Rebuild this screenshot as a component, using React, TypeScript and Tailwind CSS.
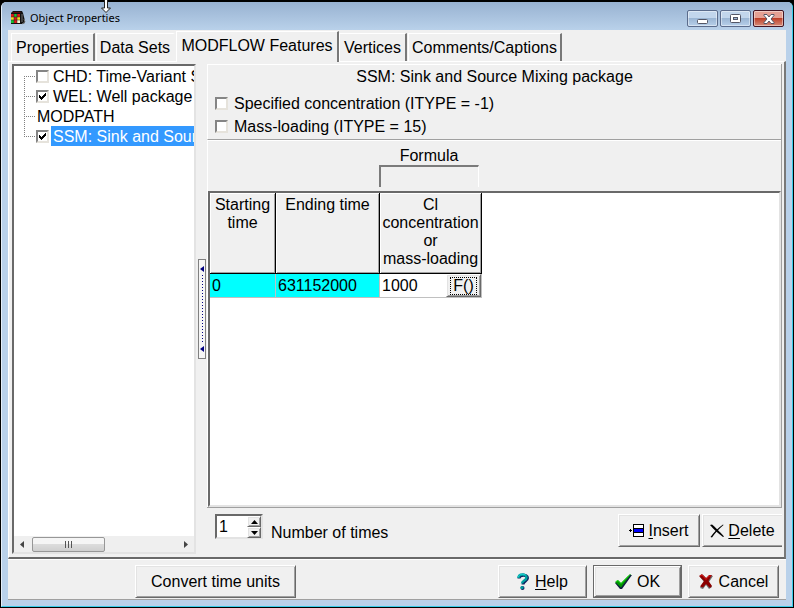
import { useState } from "react";
import type { ReactNode } from "react";

const raised =
  "border border-t-white border-l-white border-r-[#696969] border-b-[#696969] shadow-[inset_1px_1px_0_#e3e3e3,inset_-1px_-1px_0_#a0a0a0]";
const sunken =
  "border-2 border-t-[#696969] border-l-[#696969] border-r-[#e3e3e3] border-b-[#e3e3e3]";

function Check({ id, checked }: { id: string; checked?: boolean }) {
  return (
    <span className="relative block size-[13px] shrink-0">
      <input
        id={id}
        type="checkbox"
        defaultChecked={checked}
        className="peer block size-[13px] appearance-none border-2 border-t-[#858585] border-l-[#858585] border-r-[#e6e3dc] border-b-[#e6e3dc] bg-white"
      />
      <svg
        viewBox="0 0 13 13"
        className="pointer-events-none absolute inset-0 hidden size-[13px] peer-checked:block"
        shapeRendering="crispEdges"
      >
        <path
          d="M3 5h1v3h-1zM4 6h1v3h-1zM5 7h1v3h-1zM6 6h1v3h-1zM7 5h1v3h-1zM8 4h1v3h-1zM9 3h1v3h-1z"
          fill="#000"
        />
      </svg>
    </span>
  );
}

function CubeIcon() {
  return (
    <svg viewBox="0 0 16 16" className="size-4">
      <path d="M1 3l2-2h9l1 2 2 8v2l-3 1H1z" fill="#111" />
      <path d="M3 2h8l-1 1H2z" fill="#5a1010" />
      <path d="M12 4v8M14 9l1 3-3 2" stroke="#777" fill="none" />
      <path d="M1 4h3v3H1zM4 10h3v3H4zM7 4h3v3H7zM4 7h3v3H4z" fill="#e01818" />
      <path d="M4 4h3v3H4zM1 10h3v3H1z" fill="#18c030" />
      <path d="M7 7h3v3H7zM1 7h3v3H1z" fill="#f4e420" />
      <path d="M7 10h3v3H7z" fill="#f8f8d0" />
      <path d="M4 4v9M7 4v9M1 7h9M1 10h9" stroke="#222" strokeWidth="0.500" />
    </svg>
  );
}

function CaptionButton({ label, close, children }: { label: string; close?: boolean; children: ReactNode }) {
  return (
    <button
      aria-label={label}
      className={
        "flex h-[17px] w-[31px] items-center justify-center rounded-[2px] border shadow-[inset_0_0_0_1px_#ffffff70] " +
        (close
          ? "border-[#431422] bg-linear-to-b from-[#e5a093] from-45% via-[#bd3f28] via-50% to-[#d58a78]"
          : "border-[#5b6c8c] bg-linear-to-b from-[#c2d6ec] from-45% via-[#9bb6d4] via-50% to-[#b7d0ea]")
      }
    >
      {children}
    </button>
  );
}

function TitleBar() {
  return (
    <header className="flex h-[28px] shrink-0 items-start justify-between bg-linear-to-b from-[#98b2d1] to-[#b9d1ea] px-[8px]">
      <h1 className="mt-[8px] flex items-center gap-1 font-['Noto_Sans','Open_Sans',sans-serif] text-[11px] leading-4 text-black">
        <CubeIcon />
        Object Properties
      </h1>
      <div className="mt-[8px] flex gap-[2px]">
        <CaptionButton label="Minimize">
          <svg viewBox="0 0 11 10" className="h-[10px] w-[11px]">
            <rect x="0.5" y="5.5" width="10" height="4" rx="1" fill="#fff" stroke="#535666" />
          </svg>
        </CaptionButton>
        <CaptionButton label="Maximize">
          <svg viewBox="0 0 11 9" className="h-[9px] w-[11px]">
            <rect x="0.5" y="0.5" width="10" height="8" rx="1" fill="#fff" stroke="#535666" />
            <rect x="3.5" y="3.5" width="4" height="2" fill="#9bb6d4" stroke="#535666" />
          </svg>
        </CaptionButton>
        <CaptionButton label="Close" close>
          <svg viewBox="0 0 12 10" className="h-[10px] w-3">
            <path
              d="M1 .5h3L6 3l2-2.500h3v1L8 5l3 3.500v1H8L6 7 4 9.500H1v-1L4 5 1 1.500z"
              fill="#fff"
              stroke="#535666"
            />
          </svg>
        </CaptionButton>
      </div>
    </header>
  );
}

const tabs = [
  { label: "Properties", width: "w-[84px]" },
  { label: "Data Sets", width: "w-[79px]" },
  { label: "MODFLOW Features", width: "w-[163px]" },
  { label: "Vertices", width: "w-[68px]" },
  { label: "Comments/Captions", width: "w-[154px]" },
];

function Tabs() {
  return (
    <div role="tablist" className="flex h-[31px] shrink-0 items-end pl-[3px]">
      {tabs.map((t) => {
        const active = t.label === "MODFLOW Features";
        return (
          <button
            key={t.label}
            role="tab"
            aria-selected={active}
            className={
              "flex items-start justify-center border-t border-l border-t-white border-l-white bg-[#f0f0f0] leading-[18px] whitespace-nowrap " +
              t.width +
              (active
                ? " relative -mb-px h-[31px] border-r-2 border-r-[#787878] pt-[5px]"
                : " mr-px h-[28px] border-r-2 pt-[5px] " +
                  (t.label === "Data Sets" ? "border-r-[#f0f0f0]" : "border-r-[#787878]"))
            }
          >
            {t.label}
          </button>
        );
      })}
    </div>
  );
}

const features = [
  { label: "CHD: Time-Variant S", box: true, checked: false, selected: false },
  { label: "WEL: Well package", box: true, checked: true, selected: false },
  { label: "MODPATH", box: false, checked: false, selected: false },
  { label: "SSM: Sink and Sour", box: true, checked: true, selected: true },
];

function FeatureTree() {
  return (
    <aside className={"flex w-[184px] shrink-0 flex-col bg-white " + sunken}>
      <ul className="min-h-0 flex-1 overflow-hidden pl-[10px]">
        {features.map((f, i) => (
          <li key={f.label} className="flex h-5 items-center whitespace-nowrap">
            <svg viewBox="0 0 12 20" className="h-5 w-3 shrink-0" shapeRendering="crispEdges">
              <path
                d={
                  i === 0 ? "M.5 10v10" : i === features.length - 1 ? "M.5 0v10" : "M.5 0v20"
                }
                stroke="#808080"
                strokeDasharray="1 1"
              />
              <path d="M0 10.500h12" stroke="#808080" strokeDasharray="1 1" />
            </svg>
            {f.box && <Check id={"feature" + i} checked={f.checked} />}
            <label
              htmlFor={f.box ? "feature" + i : undefined}
              className={
                "h-5 min-w-0 pt-[2px] leading-[18px] " +
                (f.box ? "ml-[2px] flex-1 overflow-hidden pl-[2px] " : "pl-px ") +
                (f.selected ? "bg-[#3399ff] text-white" : "")
              }
            >
              {f.label}
            </label>
          </li>
        ))}
      </ul>
      <div className="flex h-[16px] shrink-0 items-center bg-[#efefef] px-[6px]">
        <svg viewBox="0 0 4 7" className="h-[7px] w-1">
          <path d="M4 0v7L0 3.500z" fill="#444" />
        </svg>
        <div className="ml-[8px] flex h-[15px] w-[73px] items-center justify-center gap-[2px] rounded-[2px] border border-[#979797] bg-linear-to-b from-[#f5f5f5] from-45% via-[#dcdcdc] via-50% to-[#cfcfcf]">
          <i className="h-[7px] w-px bg-[#555]" />
          <i className="h-[7px] w-px bg-[#555]" />
          <i className="h-[7px] w-px bg-[#555]" />
        </div>
        <svg viewBox="0 0 4 7" className="ml-auto h-[7px] w-1">
          <path d="M0 0v7l4-3.500z" fill="#444" />
        </svg>
      </div>
    </aside>
  );
}

function Splitter() {
  return (
    <div className="flex w-[11px] shrink-0 items-center justify-center">
      <div className="flex h-[100px] w-2 flex-col items-center justify-between border border-[#808080] bg-[#f6f6f6] py-[6px]">
        <svg viewBox="0 0 4 6" className="h-[6px] w-1">
          <path d="M4 0v6L0 3z" fill="#000080" />
        </svg>
        <svg viewBox="0 0 2 68" className="h-[68px] w-[2px]" shapeRendering="crispEdges">
          <path d="M1.500 0v68" stroke="#000080" strokeDasharray="1 2" />
        </svg>
        <svg viewBox="0 0 4 6" className="h-[6px] w-1">
          <path d="M4 0v6L0 3z" fill="#000080" />
        </svg>
      </div>
    </div>
  );
}

function PackageOptions() {
  return (
    <section className="h-[76px] shrink-0 border-t border-b border-l border-t-white border-b-[#a0a0a0] border-l-white pt-[2px]">
      <h2 className="text-center leading-[20px]">SSM: Sink and Source Mixing package</h2>
      <div className="mt-[5px] flex flex-col pl-[7px]">
        <div className="flex h-[23px] items-center gap-[6px]">
          <Check id="specified" />
          <label htmlFor="specified">Specified concentration (ITYPE = -1)</label>
        </div>
        <div className="flex h-[23px] items-center gap-[6px]">
          <Check id="mass" />
          <label htmlFor="mass">Mass-loading (ITYPE = 15)</label>
        </div>
      </div>
    </section>
  );
}

function FormulaBar() {
  return (
    <section className="flex h-[51px] shrink-0 flex-col border-t border-l border-white pl-[171px]">
      <label htmlFor="formula" className="mt-[6px] w-[100px] text-center leading-[18px]">
        Formula
      </label>
      <input
        id="formula"
        className="h-[22px] w-[100px] border-t-2 border-r border-l-2 border-t-[#7b7b7b] border-r-white border-l-[#7b7b7b] bg-[#f0f0f0] px-1"
      />
    </section>
  );
}

const th =
  "h-[81px] border-r border-b border-black bg-[#f0f0f0] p-0 pt-[3px] align-top font-normal leading-[18px] shadow-[inset_1px_1px_0_#fff,inset_-1px_-1px_0_#a0a0a0]";
const td = "h-[24px] border-r border-b border-[#c0c0c0] p-0 pl-[2px] leading-[20px]";

function TimesTable() {
  return (
    <div className={"min-h-0 flex-1 bg-white " + sunken}>
      <table className="w-[272px] table-fixed border-separate border-spacing-0">
        <colgroup>
          <col className="w-[66px]" />
          <col className="w-[104px]" />
          <col className="w-[102px]" />
        </colgroup>
        <thead>
          <tr>
            <th className={th}>Starting time</th>
            <th className={th}>Ending time</th>
            <th className={th}>
              Cl concentration or <span className="whitespace-nowrap">mass-loading</span>
            </th>
          </tr>
        </thead>
        <tbody>
          <tr>
            <td className={td + " bg-[#00ffff]"}>0</td>
            <td className={td + " bg-[#00ffff]"}>631152000</td>
            <td className={td}>
              <div className="flex h-[23px] items-center justify-between">
                1000
                <button className={"h-[23px] w-[35px] bg-[#f0f0f0] p-px " + raised}>
                  <span className="mx-auto block h-[18px] w-[27px] border border-dotted border-black text-center leading-[16px]">
                    F()
                  </span>
                </button>
              </div>
            </td>
          </tr>
        </tbody>
      </table>
    </div>
  );
}

function TimesFooter() {
  const [count, setCount] = useState("1");
  const step = (n: number) => setCount(String(Math.max(0, Number(count) + n)));
  const arrow = "flex h-[11px] w-[14px] items-center justify-center bg-[#f0f0f0] " + raised;
  return (
    <section className="flex h-[46px] shrink-0 items-start justify-between pt-[6px] pl-[8px]">
      <div className="flex">
        <div className={"flex h-[25px] w-[48px] items-start bg-white " + sunken}>
          <input
            id="times"
            value={count}
            onChange={(e) => setCount(e.target.value)}
            className="h-[21px] w-[30px] px-[2px] leading-[20px] outline-none"
          />
          <span className="flex flex-col">
            <button aria-label="More" onClick={() => step(1)} className={arrow}>
              <svg viewBox="0 0 7 4" className="h-1 w-[7px]">
                <path d="M0 4h7L3.500 0z" />
              </svg>
            </button>
            <button aria-label="Fewer" onClick={() => step(-1)} className={arrow}>
              <svg viewBox="0 0 7 4" className="h-1 w-[7px]">
                <path d="M0 0h7L3.500 4z" />
              </svg>
            </button>
          </span>
        </div>
        <label htmlFor="times" className="mt-[10px] ml-[8px] leading-[18px]">
          Number of times
        </label>
      </div>
      <div className="flex gap-[2px]">
        <button className={"flex h-[33px] w-[82px] items-center justify-center gap-1 " + raised}>
          <svg viewBox="0 0 15 13" className="h-[13px] w-[15px]" shapeRendering="crispEdges">
            <path d="M0 6h3v1H0zM1 5h1v3H1z" fill="#000" />
            <path d="M4 0h11v13H4z" fill="#000" />
            <path d="M5 1h9v3H5zM5 9h9v3H5z" fill="#fff" />
            <path d="M5 5h9v3H5z" fill="#00f" />
          </svg>
          <span>
            <u className="underline-offset-2">I</u>nsert
          </span>
        </button>
        <button
          className={
            "flex h-[33px] w-[80px] items-center justify-center gap-1 border border-t-white border-r-0 border-b-[#696969] border-l-white shadow-[inset_1px_1px_0_#e3e3e3,inset_0_-1px_0_#a0a0a0]"
          }
        >
          <svg viewBox="0 0 14 14" className="size-[14px]" fill="#000">
            <path d="M0 1l2-.5C5 3 10 8 14 12.500l-1 .5C9 10 4 6 0 1z" />
            <path d="M13 .5l.5.5C9 5 5 9 2 13.500L.5 13C4 8 8 4 13 .5z" />
          </svg>
          <span>
            <u className="underline-offset-2">D</u>elete
          </span>
        </button>
      </div>
    </section>
  );
}

function DialogButtons() {
  return (
    <footer className="flex h-[40px] shrink-0 items-start justify-between border-t border-white pt-[5px] pr-[7px] pl-[127px]">
      <button className={"h-[33px] w-[161px] " + raised}>Convert time units</button>
      <div className="flex gap-[6px]">
        <button className={"flex h-[33px] w-[89px] items-center justify-center gap-[6px] " + raised}>
          <svg viewBox="0 0 12 17" className="h-[17px] w-3" fill="none">
            <path d="M2 5.500c0-4 8.500-4.500 8.500-.5 0 3-4.500 3-4.500 6.500" stroke="#102060" strokeWidth="3" />
            <path d="M1.500 5c0-4.500 8-4.500 8-.5 0 3-4.500 3-4.500 6" stroke="#00a0a0" strokeWidth="2.500" />
            <path d="M1 4c1.500-3.500 6-3 7.500-2" stroke="#20d8d8" />
            <circle cx="5.500" cy="15" r="2" fill="#102060" />
            <circle cx="5" cy="14.500" r="1.600" fill="#00a0a0" />
          </svg>
          <span>
            <u className="underline-offset-2">H</u>elp
          </span>
        </button>
        <button className="h-[33px] w-[89px] border border-[#696969]">
          <span className={"flex h-full items-center justify-center gap-[5px] " + raised}>
            <svg viewBox="0 0 17 15" className="h-[15px] w-[17px]">
              <path d="M0 9l3-2 3 3 9-9h2L7 15H5z" fill="#102040" />
              <path d="M0 8l3-2 3 3 9-9h1L6 13.500z" fill="#009800" />
              <path d="M1 7.500l2-1 3 3 8-8" fill="none" stroke="#20e020" />
            </svg>
            OK
          </span>
        </button>
        <button className={"flex h-[33px] w-[91px] items-center justify-center gap-[6px] " + raised}>
          <svg viewBox="0 0 14 15" className="h-[15px] w-[14px]">
            <path d="M1 3l3-2 4 4 3-4 3 1-4 6 3 5-3 2-3-4-3 4-3-1 4-6z" fill="#707070" />
            <path d="M0 2l3-2 4 4 3-3h3L9.500 7l3.500 5-2 2-4-4-3 3.500-3-1L5 7z" fill="#8c0000" />
            <path d="M1 2l2-1 4 4.500L10 2h2" fill="none" stroke="#d81818" />
          </svg>
          Cancel
        </button>
      </div>
    </footer>
  );
}

export default function App() {
  return (
    <div className="relative flex h-screen bg-black font-['Liberation_Sans',Arial,sans-serif] text-[16px] leading-[18px] text-black">
      <main className="flex min-w-0 flex-1 flex-col overflow-hidden rounded-t-[6px] border border-t-2 border-black">
        <div className="flex min-h-0 flex-1 flex-col overflow-hidden rounded-t-[5px] border-r border-b border-l border-l-[#e4eef8] border-r-[#38cbe8] border-b-[#38cbe8] bg-[#b9d1ea]">
          <TitleBar />
          <div className="mr-[6px] mb-[6px] ml-[6px] flex min-h-0 flex-1 flex-col border-b border-[#a0a0a0] bg-[#f0f0f0]">
            <Tabs />
            <div className="flex min-h-0 flex-1 border-t border-r-2 border-b-2 border-l border-t-white border-r-[#787878] border-b-[#696969] border-l-white pt-[2px] pr-[2px] pb-[3px] pl-[3px]">
              <FeatureTree />
              <Splitter />
              <div className="flex min-w-0 flex-1 flex-col">
                <div className="flex min-h-0 flex-1 flex-col border-r border-b border-[#a0a0a0]">
                  <PackageOptions />
                  <FormulaBar />
                  <div className="flex min-h-0 flex-1 border-l border-white">
                    <TimesTable />
                  </div>
                </div>
                <TimesFooter />
              </div>
            </div>
            <DialogButtons />
          </div>
        </div>
      </main>
      <svg viewBox="0 0 10 14" className="pointer-events-none absolute top-0 left-[101px] h-[14px] w-[10px]">
        <path d="M3.500 0v8h-3L5 12.500 9.500 8h-3V0" fill="#fff" stroke="#222" />
      </svg>
    </div>
  );
}
